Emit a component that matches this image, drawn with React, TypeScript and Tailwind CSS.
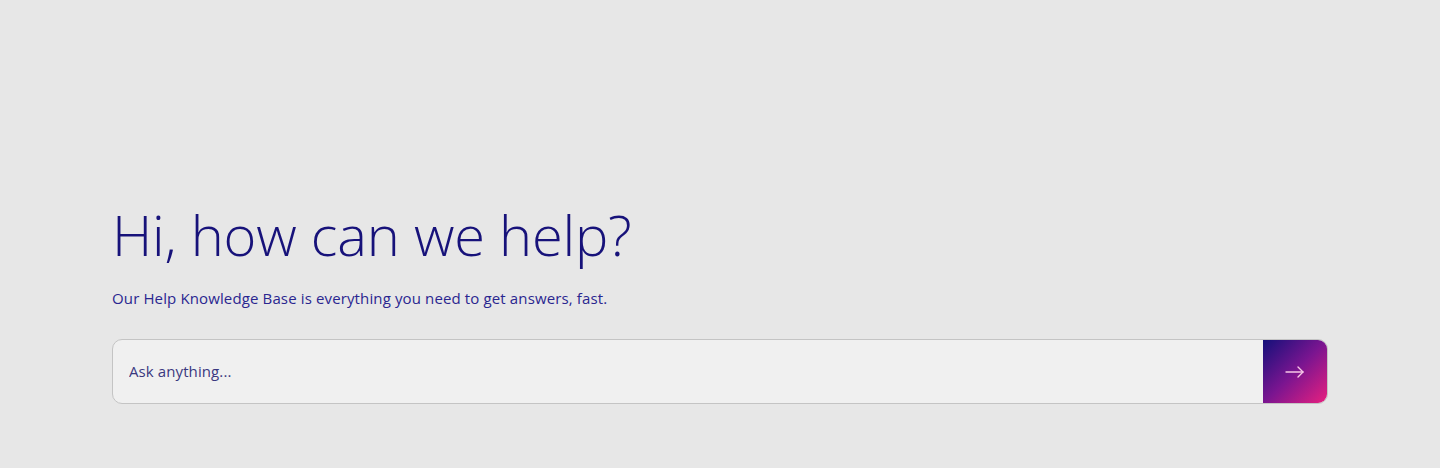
import React from "react";

export default function App() {
  return (
    <div className="w-[1440px] h-[468px] bg-[#e7e7e7] overflow-hidden" style={{ fontFamily: '"Open Sans", "Noto Sans", sans-serif' }}>
      <div className="px-[112px] pt-[198px]">
        <h1 className="text-[56px] leading-[72px] font-light text-[#17127a] tracking-[-0.2px]">Hi, how can we help?</h1>
        <p className="mt-[17px] text-[15px] leading-[22px] text-[#2a2690] tracking-[0.13px]">Our Help Knowledge Base is everything you need to get answers, fast.</p>
        <div className="mt-[30px] flex h-[65px] w-[1216px] rounded-[10px] border border-[#c4c4c4] bg-[#f0f0f0] overflow-hidden">
          <input
            className="flex-1 bg-transparent px-[16px] text-[15px] text-[#2a2690] placeholder:text-[#3b3880] outline-none tracking-[0.1px]"
            placeholder="Ask anything..."
          />
          <button className="w-[64px] h-full flex items-center justify-center bg-[linear-gradient(135deg,#14107a_0%,#7a1590_50%,#e8207f_100%)]">
            <svg width="20" height="12" viewBox="0 0 20 12" fill="none" stroke="#f7c8e6" strokeWidth="1.4" strokeLinecap="round" strokeLinejoin="round">
              <path d="M1 6h17" />
              <path d="M13 1l5 5-5 5" />
            </svg>
          </button>
        </div>
      </div>
    </div>
  );
}
